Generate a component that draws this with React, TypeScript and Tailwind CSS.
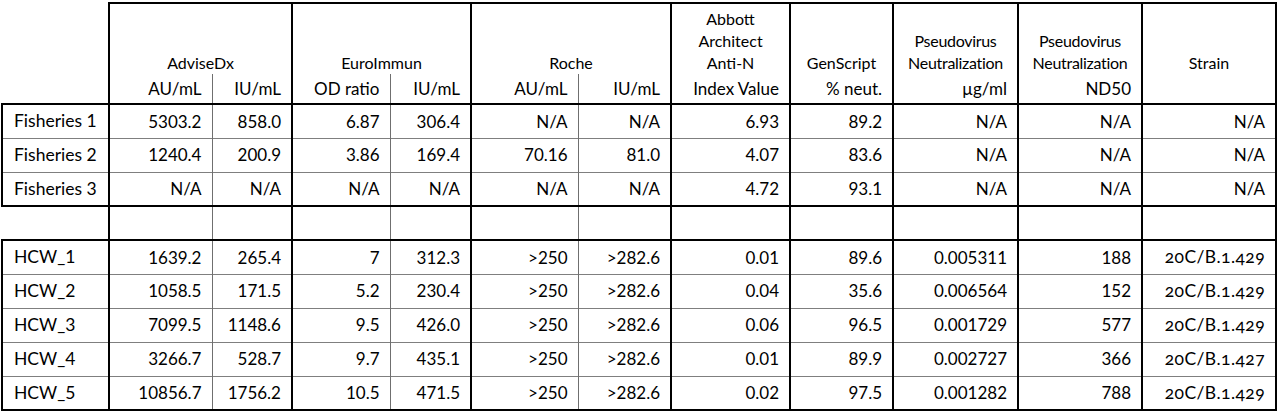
const groupHead = "border-t-2 border-t-black border-r-2 border-r-black align-bottom text-center font-normal px-1 pb-0";
const thick = "border-r-2 border-r-black";
const thin = "border-r border-r-[#6f6f6f]";

const rb = (i: number) => (i === 1 || i === 3 || i === 5 ? thin : thick);

const units = ["AU/mL", "IU/mL", "OD ratio", "IU/mL", "AU/mL", "IU/mL", "Index Value", "% neut.", "µg/ml", "ND50", ""];

const fisheries = [
  ["Fisheries 1", "5303.2", "858.0", "6.87", "306.4", "N/A", "N/A", "6.93", "89.2", "N/A", "N/A", "N/A"],
  ["Fisheries 2", "1240.4", "200.9", "3.86", "169.4", "70.16", "81.0", "4.07", "83.6", "N/A", "N/A", "N/A"],
  ["Fisheries 3", "N/A", "N/A", "N/A", "N/A", "N/A", "N/A", "4.72", "93.1", "N/A", "N/A", "N/A"],
];

const hcw = [
  ["HCW_1", "1639.2", "265.4", "7", "312.3", ">250", ">282.6", "0.01", "89.6", "0.005311", "188", "20C/B.1.429"],
  ["HCW_2", "1058.5", "171.5", "5.2", "230.4", ">250", ">282.6", "0.04", "35.6", "0.006564", "152", "20C/B.1.429"],
  ["HCW_3", "7099.5", "1148.6", "9.5", "426.0", ">250", ">282.6", "0.06", "96.5", "0.001729", "577", "20C/B.1.429"],
  ["HCW_4", "3266.7", "528.7", "9.7", "435.1", ">250", ">282.6", "0.01", "89.9", "0.002727", "366", "20C/B.1.427"],
  ["HCW_5", "10856.7", "1756.2", "10.5", "471.5", ">250", ">282.6", "0.02", "97.5", "0.001282", "788", "20C/B.1.429"],
];

const BodyRows = ({ rows }: { rows: string[][] }) => (
  <>
    {rows.map((row, r) => {
      const last = r === rows.length - 1;
      return (
        <tr
          key={row[0]}
          className={
            "h-[34px] " +
            (r === 0 ? "border-t-2 border-t-black " : "") +
            (last ? "border-b-2 border-b-black" : "border-b border-b-[#7f7f7f]")
          }
        >
          {row.map((cell, i) =>
            i === 0 ? (
              <td key={i} className="border-l-2 border-l-black border-r-2 border-r-black pl-[11px] text-left text-[17.5px]">
                {cell}
              </td>
            ) : (
              <td
                key={i}
                className={
                  rb(i) +
                  " pr-[10px] text-right" +
                  (i === 11 && cell !== "N/A" ? " oldstyle-nums tracking-[0.4px] text-[17.5px]" : "")
                }
              >
                {cell}
              </td>
            )
          )}
        </tr>
      );
    })}
  </>
);

export default function App() {
  return (
    <div className="bg-white w-[1280px] h-[411px] pt-[2px] pl-[1px] text-black font-['Lato',sans-serif] text-[17px]">
      <table className="table-fixed border-collapse w-[1274px]">
        <colgroup>
          <col className="w-[107px]" />
          <col className="w-[103px]" />
          <col className="w-[80px]" />
          <col className="w-[98px]" />
          <col className="w-[81px]" />
          <col className="w-[107px]" />
          <col className="w-[93px]" />
          <col className="w-[119px]" />
          <col className="w-[103px]" />
          <col className="w-[125px]" />
          <col className="w-[124px]" />
          <col className="w-[134px]" />
        </colgroup>
        <thead className="text-[16px] leading-[22px]">
          <tr className="h-[71px]">
            <th className="border-r-2 border-r-black" />
            <th colSpan={2} className={groupHead}>AdviseDx</th>
            <th colSpan={2} className={groupHead}>EuroImmun</th>
            <th colSpan={2} className={groupHead}>Roche</th>
            <th className={groupHead}>
              Abbott
              <br />
              Architect
              <br />
              Anti-N
            </th>
            <th className={groupHead}>GenScript</th>
            <th className={groupHead + " tracking-[-0.3px]"}>
              Pseudovirus
              <br />
              Neutralization
            </th>
            <th className={groupHead + " tracking-[-0.3px]"}>
              Pseudovirus
              <br />
              Neutralization
            </th>
            <th className={groupHead}>Strain</th>
          </tr>
          <tr className="h-[30px] text-[17px]">
            <th className="border-r-2 border-r-black" />
            {units.map((u, j) => (
              <th
                key={j}
                className={rb(j + 1) + " border-b-2 border-b-black pr-[10px] text-right font-normal align-middle"}
              >
                {u}
              </th>
            ))}
          </tr>
        </thead>
        <tbody>
          <BodyRows rows={fisheries} />
          <tr className="h-[34px]">
            <td className="border-r-2 border-r-black" />
            {units.map((_, j) => (
              <td key={j} className={rb(j + 1)} />
            ))}
          </tr>
          <BodyRows rows={hcw} />
        </tbody>
      </table>
    </div>
  );
}
